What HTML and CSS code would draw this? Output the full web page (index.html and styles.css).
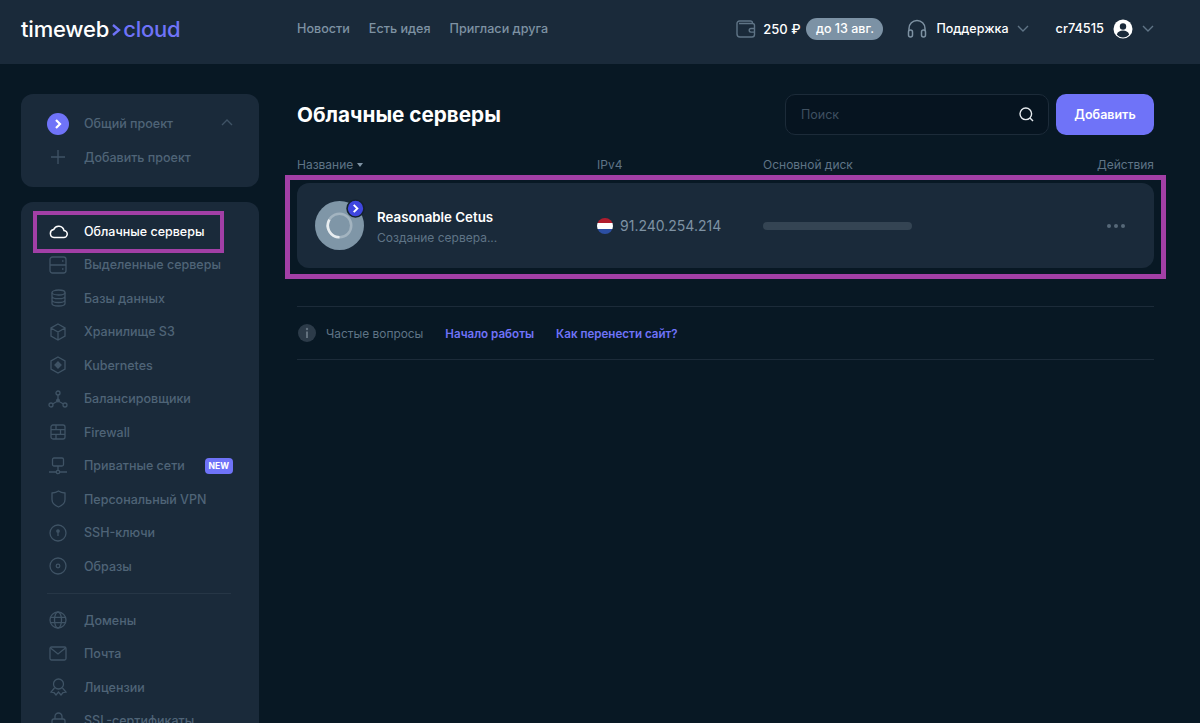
FILE: index.html

```html
<!DOCTYPE html>
<html lang="ru">
<head>
    <meta charset="UTF-8">
    <meta name="viewport" content="width=device-width, initial-scale=1.0">
    <title>Облачные серверы</title>
    <link rel="stylesheet" href="styles.css">
</head>
<body>
    <header class="topbar">
        <div class="logo">timeweb<svg class="logo-arrow" width="11" height="14" viewBox="0 0 11 14"><path d="M2 2l6 5-6 5" fill="none" stroke="#6f73f8" stroke-width="2.4"/></svg><span class="logo-cloud">cloud</span></div>
        <nav class="topnav">
            <a>Новости</a>
            <a>Есть идея</a>
            <a>Пригласи друга</a>
        </nav>
        <div class="topright">
            <div class="balance">
                <svg width="20" height="18" viewBox="0 0 20 18" fill="none" stroke="#5f7486" stroke-width="1.4"><path d="M3 3.5h13.500v-0.500a2 2 0 0 0-2-2H3.500A2.500 2.500 0 0 0 1 3.500v10.500a3 3 0 0 0 3 3h12a2.500 2.500 0 0 0 2.500-2.500V5.500a2 2 0 0 0-2-2"/><path d="M18.500 8.500h-3.500a1.800 1.800 0 0 0 0 3.600h3.500"/></svg>
                <span class="balance-sum">250 ₽</span>
                <span class="pill">до 13 авг.</span>
            </div>
            <div class="support">
                <svg width="20" height="19" viewBox="0 0 20 19" fill="none" stroke="#7e92a3" stroke-width="1.500"><path d="M2 12V9.500a8 8 0 0 1 16 0V12"/><rect x="1.500" y="11" width="4" height="7" rx="2"/><rect x="14.500" y="11" width="4" height="7" rx="2"/></svg>
                <span>Поддержка</span>
                <svg class="chev" width="12" height="7" viewBox="0 0 12 7" fill="none" stroke="#5f7486" stroke-width="1.400"><path d="M1 1l5 5 5-5"/></svg>
            </div>
            <div class="account">
                <span>cr74515</span>
                <svg width="20" height="20" viewBox="0 0 20 20"><circle cx="10" cy="10" r="9.500" fill="#fff"/><circle cx="10" cy="7.500" r="3.200" fill="#1a2a3a"/><path d="M3.800 15.500c1-3 3.400-4 6.200-4s5.200 1 6.200 4c-1.600 1.800-3.800 3-6.200 3s-4.600-1.200-6.200-3z" fill="#1a2a3a"/></svg>
                <svg class="chev" width="12" height="7" viewBox="0 0 12 7" fill="none" stroke="#5f7486" stroke-width="1.400"><path d="M1 1l5 5 5-5"/></svg>
            </div>
        </div>
    </header>

    <div class="layout">
        <aside class="sidebar">
            <div class="card projects">
                <div class="item">
                    <span class="icon"><svg width="22" height="22" viewBox="0 0 22 22"><circle cx="11" cy="11" r="11" fill="#6f73f8"/><path d="M9 7l4 4-4 4" fill="none" stroke="#fff" stroke-width="2.200"/></svg></span>
                    <span class="label">Общий проект</span>
                    <svg class="project-chev" width="12" height="7" viewBox="0 0 12 7" fill="none" stroke="#3f5365" stroke-width="1.400"><path d="M1 6l5-5 5 5"/></svg>
                </div>
                <div class="item">
                    <span class="icon"><svg width="16" height="16" viewBox="0 0 16 16" stroke="#3f5365" stroke-width="1.300"><path d="M8 1v14M1 8h14"/></svg></span>
                    <span class="label">Добавить проект</span>
                </div>
            </div>

            <div class="card menu">
                <div class="item active">
                    <span class="mark"></span>
                    <span class="icon"><svg width="19" height="15" viewBox="0 0 19 15" fill="none" stroke="#fff" stroke-width="1.500"><path d="M5 13.500h9.500a3.500 3.500 0 0 0 .5-7A5.500 5.500 0 0 0 4.600 5.600 4 4 0 0 0 5 13.500z"/></svg></span>
                    <span class="label">Облачные серверы</span>
                </div>
                <div class="item">
                    <span class="icon"><svg width="18" height="18" viewBox="0 0 18 18" fill="none" stroke="#3f5365" stroke-width="1.300"><rect x="1" y="1" width="16" height="16" rx="2.500"/><path d="M1 9h16M13 5h1.500M13 13h1.500"/></svg></span>
                    <span class="label">Выделенные серверы</span>
                </div>
                <div class="item">
                    <span class="icon"><svg width="15" height="18" viewBox="0 0 15 18" fill="none" stroke="#3f5365" stroke-width="1.300"><ellipse cx="7.500" cy="3.500" rx="6.500" ry="2.500"/><path d="M1 3.500v11c0 1.400 2.900 2.500 6.500 2.500s6.500-1.100 6.500-2.500v-11M1 7.200c0 1.400 2.900 2.500 6.500 2.500s6.500-1.100 6.500-2.500M1 11c0 1.400 2.900 2.500 6.500 2.500S14 12.400 14 11"/></svg></span>
                    <span class="label">Базы данных</span>
                </div>
                <div class="item">
                    <span class="icon"><svg width="16" height="18" viewBox="0 0 16 18" fill="none" stroke="#3f5365" stroke-width="1.300"><path d="M8 1l7 4v8l-7 4-7-4V5zM1 5l7 4 7-4M8 9v8"/></svg></span>
                    <span class="label">Хранилище S3</span>
                </div>
                <div class="item">
                    <span class="icon"><svg width="16" height="18" viewBox="0 0 16 18" fill="none" stroke="#3f5365" stroke-width="1.300"><path d="M8 1l7 4v8l-7 4-7-4V5z"/><path d="M8 6l3 3-3 3-3-3z" fill="#3f5365"/></svg></span>
                    <span class="label">Kubernetes</span>
                </div>
                <div class="item">
                    <span class="icon"><svg width="20" height="18" viewBox="0 0 20 18" fill="none" stroke="#3f5365" stroke-width="1.300"><circle cx="10" cy="3" r="2"/><circle cx="3" cy="15" r="2"/><circle cx="17" cy="15" r="2"/><circle cx="10" cy="10.500" r="1.300" fill="#3f5365"/><path d="M10 5v5M9 11.500l-4.500 2.500M11 11.500l4.500 2.500"/></svg></span>
                    <span class="label">Балансировщики</span>
                </div>
                <div class="item">
                    <span class="icon"><svg width="16" height="16" viewBox="0 0 16 16" fill="none" stroke="#3f5365" stroke-width="1.300"><rect x="1" y="1" width="14" height="14" rx="2"/><path d="M1 5.600h14M1 10.400h14M6 1v4.600M10.500 5.600v4.800M6 10.400V15"/></svg></span>
                    <span class="label">Firewall</span>
                </div>
                <div class="item">
                    <span class="icon"><svg width="18" height="18" viewBox="0 0 18 18" fill="none" stroke="#3f5365" stroke-width="1.300"><rect x="3.500" y="1" width="11" height="8" rx="1.500"/><path d="M9 9v5M0 15h7M11 15h7"/><circle cx="9" cy="15" r="1.700"/></svg></span>
                    <span class="label">Приватные сети</span>
                    <span class="new">NEW</span>
                </div>
                <div class="item">
                    <span class="icon"><svg width="15" height="18" viewBox="0 0 15 18" fill="none" stroke="#3f5365" stroke-width="1.300"><path d="M7.500 1c1.800 1.200 3.800 1.800 6.500 2v6.500c0 3.400-2.600 6-6.500 7.500C3.600 15.500 1 12.900 1 9.500V3c2.700-.2 4.700-.8 6.500-2z"/></svg></span>
                    <span class="label">Персональный VPN</span>
                </div>
                <div class="item">
                    <span class="icon"><svg width="18" height="18" viewBox="0 0 18 18" fill="none" stroke="#3f5365" stroke-width="1.300"><circle cx="9" cy="9" r="8"/><circle cx="9" cy="7" r="1.200" fill="#3f5365"/><path d="M9 8v4"/></svg></span>
                    <span class="label">SSH-ключи</span>
                </div>
                <div class="item">
                    <span class="icon"><svg width="18" height="18" viewBox="0 0 18 18" fill="none" stroke="#3f5365" stroke-width="1.300"><circle cx="9" cy="9" r="8"/><circle cx="9" cy="9" r="1.800"/></svg></span>
                    <span class="label">Образы</span>
                </div>
                <div class="sep"></div>
                <div class="item">
                    <span class="icon"><svg width="18" height="18" viewBox="0 0 18 18" fill="none" stroke="#3f5365" stroke-width="1.300"><circle cx="9" cy="9" r="8"/><ellipse cx="9" cy="9" rx="3.500" ry="8"/><path d="M1.500 6.300h15M1.500 11.700h15"/></svg></span>
                    <span class="label">Домены</span>
                </div>
                <div class="item">
                    <span class="icon"><svg width="18" height="15" viewBox="0 0 18 15" fill="none" stroke="#3f5365" stroke-width="1.300"><rect x="1" y="1" width="16" height="13" rx="1.500"/><path d="M1.500 2l7.500 6 7.500-6"/></svg></span>
                    <span class="label">Почта</span>
                </div>
                <div class="item">
                    <span class="icon"><svg width="17" height="18" viewBox="0 0 17 18" fill="none" stroke="#3f5365" stroke-width="1.300"><circle cx="8.500" cy="6" r="5"/><path d="M4.500 10L1 14l3 .5L6 17l2.500-3 2.500 3 2-2.500 3-.5-3.500-4"/></svg></span>
                    <span class="label">Лицензии</span>
                </div>
                <div class="item">
                    <span class="icon"><svg width="15" height="18" viewBox="0 0 15 18" fill="none" stroke="#3f5365" stroke-width="1.300"><rect x="1" y="7" width="13" height="10" rx="2"/><path d="M4 7V4.500a3.500 3.500 0 0 1 7 0V7"/></svg></span>
                    <span class="label">SSL-сертификаты</span>
                </div>
            </div>
        </aside>

        <main class="content">
            <div class="title-row">
                <h1>Облачные серверы</h1>
                <div class="search">
                    <span>Поиск</span>
                    <svg width="15" height="15" viewBox="0 0 15 15" fill="none" stroke="#e6ebef" stroke-width="1.400"><circle cx="6.800" cy="6.800" r="5.800"/><path d="M11 11l3 3"/></svg>
                </div>
                <button class="add">Добавить</button>
            </div>

            <div class="thead">
                <span class="col-name">Название <i class="sort"></i></span>
                <span class="col-ip">IPv4</span>
                <span class="col-disk">Основной диск</span>
                <span class="col-act">Действия</span>
            </div>

            <div class="server">
                <span class="mark"></span>
                <div class="col-name server-name">
                    <div class="avatar">
                        <svg width="49" height="49" viewBox="0 0 48 48"><circle cx="24" cy="24" r="24" fill="#7f96a7"/><circle cx="24" cy="24" r="11.500" fill="none" stroke="#a3b4c0" stroke-width="2.500"/><path d="M14.100 18.200A11.500 11.500 0 0 0 24 35.500" fill="none" stroke="#e8edf0" stroke-width="2.500"/></svg>
                        <span class="os"><svg width="19" height="19" viewBox="0 0 18 18"><circle cx="9" cy="9" r="8" fill="#3f46e0" stroke="#14222f" stroke-width="1.500"/><path d="M7.300 5.500L10.800 9l-3.500 3.500" fill="none" stroke="#fff" stroke-width="1.800"/></svg></span>
                    </div>
                    <div>
                        <div class="server-title">Reasonable Cetus</div>
                        <div class="server-status">Создание сервера...</div>
                    </div>
                </div>
                <div class="col-ip server-ip">
                    <span class="flag"></span>
                    <span>91.240.254.214</span>
                </div>
                <div class="col-disk"><div class="disk"></div></div>
                <div class="col-act dots"><i></i><i></i><i></i></div>
            </div>

            <div class="faq">
                <svg width="18" height="18" viewBox="0 0 18 18"><circle cx="9" cy="9" r="9" fill="#2c3b49"/><circle cx="9" cy="5" r="1.200" fill="#62717e"/><rect x="8" y="7.500" width="2" height="6.500" fill="#62717e"/></svg>
                <span class="faq-title">Частые вопросы</span>
                <a>Начало работы</a>
                <a>Как перенести сайт?</a>
            </div>
        </main>
    </div>
</body>
</html>
```

FILE: styles.css

```css
* { box-sizing: border-box; }
html, body { height: 100%; }
body { margin: 0; height: 723px; overflow: hidden; background-color: #081824; color: #fff; font-family: Inter, "Noto Sans", sans-serif; font-size: 12.5px; font-weight: 500; }
svg { display: block; flex: none; }

.topbar { height: 64px; background-color: #1a2a3a; display: flex; align-items: center; padding: 0 46px 7px 21px; }
.logo { width: 276px; display: flex; align-items: center; font-size: 22px; letter-spacing: -0.2px; }
.logo-arrow { margin: 2px 1px 0 2px; }
.logo-cloud { color: #6f73f8; }
.topnav { display: flex; gap: 19px; color: #7e92a3; font-size: 12.6px; }
.topright { margin-left: auto; display: flex; align-items: center; }
.balance { display: flex; align-items: center; font-size: 13px; }
.balance-sum { margin-left: 7px; }
.pill { margin-left: 6px; padding: 0 9.5px; height: 22px; line-height: 22px; background-color: #7c92a5; border-radius: 11px; font-size: 12.5px; }
.support { display: flex; align-items: center; gap: 9px; margin-left: 24px; }
.support .chev { margin-left: -1px; }
.account { display: flex; align-items: center; gap: 9px; margin-left: 27px; font-size: 12.8px; }

.layout { display: flex; padding: 30px 46px 0 21px; }
.sidebar { width: 238px; flex: none; }
.card { background-color: #1a2a3a; border-radius: 12px; }
.projects { padding: 13px 0 13px; height: 93px; margin-bottom: 15px; }
.menu { padding: 12.7px 0 0; height: 560px; }
.item { position: relative; display: flex; align-items: center; height: 33.5px; color: #4f6477; }
.icon { width: 63px; padding-left: 22px; flex: none; display: flex; justify-content: center; padding-right: 11px; }
.item.active { color: #fff; }
.item .mark { position: absolute; left: 12px; top: -4px; width: 191px; height: 42px; border: 4px solid #a23fa6; }
.project-chev { margin-left: auto; margin-right: 26px; margin-top: -2px; }
.new { margin-left: auto; margin-right: 26px; padding: 0 4px; height: 16px; line-height: 16px; background-color: #6f73f8; color: #fff; font-size: 8.5px; font-weight: 700; border-radius: 4px; }
.sep { height: 1px; margin: 10px 28px 9.3px 26px; background-color: #263646; }

.content { flex: 1; margin-left: 38px; }
.title-row { display: flex; align-items: center; height: 41px; }
h1 { margin: 0; font-size: 20.7px; font-weight: 700; }
.search { margin-left: auto; width: 264px; height: 41px; border: 1px solid #1c2b39; border-radius: 10px; background-color: #061420; display: flex; align-items: center; justify-content: space-between; padding: 0 14px 0 15px; color: #3f5060; font-weight: 400; }
.add { margin-left: 7px; width: 98px; height: 41px; background-color: #6f73f8; color: #fff; border: none; border-radius: 10px; font: inherit; font-weight: 600; }

.thead { display: flex; align-items: center; margin-top: 20px; height: 18px; color: #5f7486; font-size: 12px; font-weight: 400; }
.col-name { width: 300px; flex: none; }
.col-ip { width: 166px; flex: none; }
.col-disk { width: 200px; flex: none; }
.col-act { margin-left: auto; }
.sort { display: inline-block; width: 0; height: 0; border: 3.5px solid transparent; border-top: 4px solid #7e92a3; border-bottom: 0; vertical-align: 2px; }

.server { position: relative; display: flex; align-items: center; margin-top: 10px; height: 85px; background-color: #1a2a3a; border-radius: 12px; padding: 0 29px 0 0; }
.server > .mark { position: absolute; left: -12px; top: -8px; width: 881px; height: 104px; border: 5px solid #a23fa6; }
.server-name { display: flex; align-items: center; gap: 13px; padding-left: 18px; }
.avatar { position: relative; width: 49px; height: 49px; }
.os { position: absolute; right: -1px; top: -2px; }
.server-title { font-size: 13.3px; font-weight: 600; margin-top: 3px; }
.server-status { margin-top: 5px; font-size: 12px; color: #5f7486; font-weight: 400; }
.server-ip { display: flex; align-items: center; gap: 7px; color: #7e92a3; font-size: 14px; font-weight: 400; }
.flag { width: 16px; height: 16px; border-radius: 50%; background: linear-gradient(#b01c2e 0 33%, #fff 33% 66%, #2c4fa3 66%); }
.disk { width: 149px; height: 8px; border-radius: 4px; background-color: #344453; }
.dots { display: flex; gap: 3px; }
.dots i { width: 4px; height: 4px; border-radius: 50%; background-color: #566878; }

.faq { display: flex; align-items: center; margin-top: 38px; height: 54px; border-top: 1px solid #1c2b39; border-bottom: 1px solid #1c2b39; padding-left: 1px; }
.faq-title { margin-left: 10px; color: #5f7486; font-size: 11.9px; font-weight: 400; }
.faq a { margin-left: 22px; margin-top: 1px; color: #6f73f8; font-size: 11.6px; font-weight: 600; }
```
